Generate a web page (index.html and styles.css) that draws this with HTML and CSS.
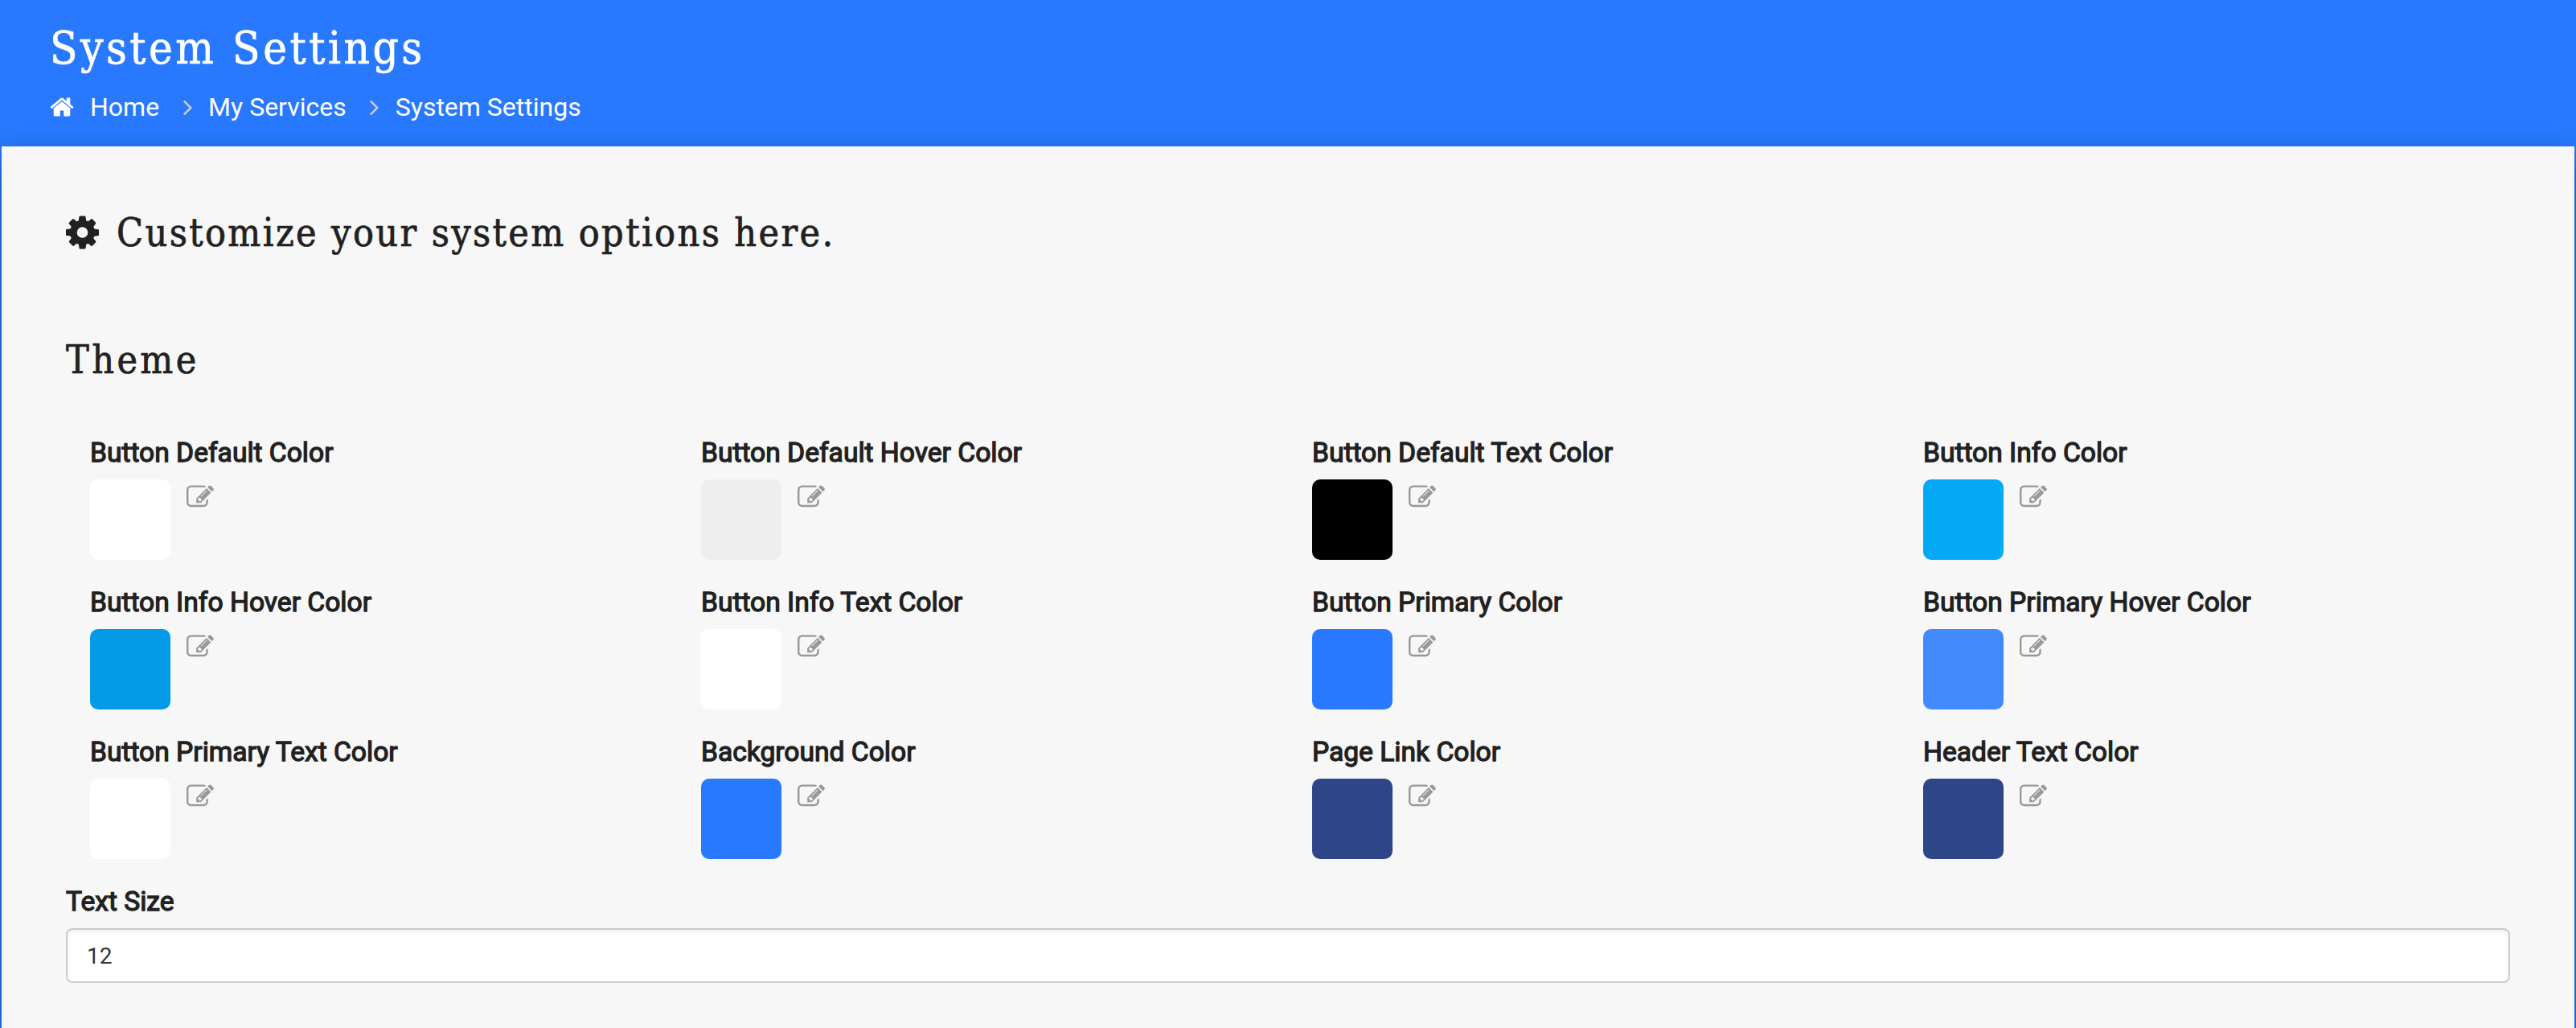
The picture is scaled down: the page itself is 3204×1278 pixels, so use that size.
FILE: index.html
```html
<!DOCTYPE html>
<html lang="en">
<head>
<meta charset="utf-8">
<title>System Settings</title>
<link rel="stylesheet" href="styles.css">
</head>
<body>
<svg class="defs" aria-hidden="true">
  <symbol id="home" viewBox="0 0 1792 1792"><path d="M1472 992v480q0 26-19 45t-45 19h-384v-384h-256v384h-384q-26 0-45-19t-19-45v-480q0-1 .5-3t.5-3l575-474 575 474q1 2 1 6zm223-69l-62 74q-8 9-21 11h-3q-13 0-21-7l-692-577-692 577q-12 8-24 7-13-2-21-11l-62-74q-8-10-7-23.500t11-21.500l719-599q32-26 76-26t76 26l244 204v-195q0-14 9-23t23-9h192q14 0 23 9t9 23v408l219 182q10 8 11 21.500t-7 23.500z"/></symbol>
  <symbol id="angle" viewBox="585 480 600 960"><path d="M1171 960q0 13-10 23l-466 466q-10 10-23 10t-23-10l-50-50q-10-10-10-23t10-23l393-393-393-393q-10-10-10-23t10-23l50-50q10-10 23-10t23 10l466 466q10 10 10 23z"/></symbol>
  <symbol id="cog" viewBox="128 128 1536 1536"><path d="M1152 896q0-106-75-181t-181-75-181 75-75 181 75 181 181 75 181-75 75-181zm512-109v222q0 12-8 23t-20 13l-185 28q-19 54-39 91 35 50 107 138 10 12 10 25t-9 23q-27 37-99 108t-94 71q-12 0-26-9l-138-108q-44 23-91 38-16 136-29 186-7 28-36 28h-222q-14 0-24.500-8.500t-11.500-21.500l-28-184q-49-16-90-37l-141 107q-10 9-25 9-14 0-25-11-126-114-165-168-7-10-7-23 0-12 8-23 15-21 51-66.500t54-70.500q-27-50-41-99l-183-27q-13-2-21-12.500t-8-23.500v-222q0-12 8-23t19-13l186-28q14-46 39-92-40-57-107-138-10-12-10-24 0-10 9-23 26-36 98.500-107.500t94.500-71.500q13 0 26 10l138 107q44-23 91-38 16-136 29-186 7-28 36-28h222q14 0 24.500 8.500t11.500 21.500l28 184q49 16 90 37l142-107q9-9 24-9 13 0 25 10 129 119 165 170 7 8 7 22 0 12-8 23-15 21-51 66.500t-54 70.500q26 50 41 98l183 28q13 2 21 12.500t8 23.500z"/></symbol>
  <symbol id="edit" viewBox="0 0 1792 1792"><path d="M888 1184l116-116-152-152-116 116v56h96v96h56zm440-720q-16-16-33 1l-350 350q-17 17-1 33t33-1l350-350q17-17 1-33zm80 594v190q0 119-84.500 203.500t-203.500 84.500h-832q-119 0-203.500-84.500t-84.500-203.500v-832q0-119 84.500-203.500t203.500-84.500h832q63 0 117 25 15 7 18 23 3 17-9 29l-49 49q-14 14-32 8-23-6-45-6h-832q-66 0-113 47t-47 113v832q0 66 47 113t113 47h832q66 0 113-47t47-113v-126q0-13 9-22l64-64q15-15 35-7t20 29zm-96-738l288 288-672 672h-288v-288zm444 132l-92 92-288-288 92-92q28-28 68-28t68 28l152 152q28 28 28 68t-28 68z"/></symbol>
</svg>
<header class="header">
  <h1 class="title">System Settings</h1>
  <nav class="crumbs">
    <svg class="home"><use href="#home"/></svg>
    <a>Home</a>
    <svg class="angle"><use href="#angle"/></svg>
    <a>My Services</a>
    <svg class="angle"><use href="#angle"/></svg>
    <a>System Settings</a>
  </nav>
</header>
<main class="panel">
  <h2 class="heading intro"><svg class="cog"><use href="#cog"/></svg><span>Customize your system options here.</span></h2>
  <h2 class="heading theme">Theme</h2>
  <section class="grid">
    <div class="option"><div class="label">Button Default Color</div><div class="pick"><i class="swatch white"></i><svg class="edit"><use href="#edit"/></svg></div></div>
    <div class="option"><div class="label">Button Default Hover Color</div><div class="pick"><i class="swatch gray"></i><svg class="edit"><use href="#edit"/></svg></div></div>
    <div class="option"><div class="label">Button Default Text Color</div><div class="pick"><i class="swatch black"></i><svg class="edit"><use href="#edit"/></svg></div></div>
    <div class="option"><div class="label">Button Info Color</div><div class="pick"><i class="swatch info"></i><svg class="edit"><use href="#edit"/></svg></div></div>
    <div class="option"><div class="label">Button Info Hover Color</div><div class="pick"><i class="swatch info-hover"></i><svg class="edit"><use href="#edit"/></svg></div></div>
    <div class="option"><div class="label">Button Info Text Color</div><div class="pick"><i class="swatch white"></i><svg class="edit"><use href="#edit"/></svg></div></div>
    <div class="option"><div class="label">Button Primary Color</div><div class="pick"><i class="swatch primary"></i><svg class="edit"><use href="#edit"/></svg></div></div>
    <div class="option"><div class="label">Button Primary Hover Color</div><div class="pick"><i class="swatch primary-hover"></i><svg class="edit"><use href="#edit"/></svg></div></div>
    <div class="option"><div class="label">Button Primary Text Color</div><div class="pick"><i class="swatch white"></i><svg class="edit"><use href="#edit"/></svg></div></div>
    <div class="option"><div class="label">Background Color</div><div class="pick"><i class="swatch primary"></i><svg class="edit"><use href="#edit"/></svg></div></div>
    <div class="option"><div class="label">Page Link Color</div><div class="pick"><i class="swatch navy"></i><svg class="edit"><use href="#edit"/></svg></div></div>
    <div class="option"><div class="label">Header Text Color</div><div class="pick"><i class="swatch navy"></i><svg class="edit"><use href="#edit"/></svg></div></div>
  </section>
  <label class="label" for="size">Text Size</label>
  <input class="input" id="size" type="text" value="12">
</main>
</body>
</html>
```
FILE: styles.css
```css
* { box-sizing: border-box; }
body {
  margin: 0;
  height: 1278px;
  overflow: hidden;
  display: flex;
  flex-direction: column;
  background: #2979ff;
  color: #212121;
  font-family: Roboto, sans-serif;
  font-size: 32px;
}
svg { fill: currentColor; flex: none; }
.defs { display: none; }
.header { flex: none; height: 182px; padding: 25px 61px 0; color: #fff; }
.title, .heading {
  margin: 0;
  font-family: "Roboto Slab", "DejaVu Serif Condensed", "DejaVu Serif", serif;
  font-stretch: condensed;
  font-weight: 400;
  white-space: nowrap;
  -webkit-text-stroke: .7px currentColor;
}
.title { padding-left: 1px; font-size: 56px; line-height: 70px; letter-spacing: 3.5px; }
.crumbs { display: flex; align-items: center; height: 40px; margin-top: 18px; }
.home { width: 32px; height: 32px; margin-right: 19px; }
.angle { width: 11px; height: 18px; margin: 2px 20.5px 0 29.5px; color: #ccc; }
.panel {
  flex: 1;
  margin: 0 2px;
  padding: 72px 80px 0;
  background: #f7f7f7;
  box-shadow: 0 16px 34px rgba(0, 0, 0, .2), 0 12px 40px rgba(0, 0, 0, .19);
}
.heading { font-size: 48px; line-height: 70px; letter-spacing: 2.4px; }
.intro { display: flex; align-items: center; gap: 22px; }
.cog { width: 41px; height: 42px; }
.theme { margin-top: 88px; letter-spacing: 3.4px; }
.grid {
  display: grid;
  grid-template-columns: repeat(4, 760px);
  grid-auto-rows: 186px;
  margin-top: 58px;
  padding-left: 30px;
}
.label { display: block; height: 56px; font-size: 33.6px; line-height: 46px; -webkit-text-stroke: 1.3px currentColor; }
.pick { display: flex; gap: 20px; }
.swatch { width: 100px; height: 100px; border-radius: 10px; }
.edit { width: 34px; height: 34px; margin-top: 5px; color: #999; }
.white { background: #fff; }
.gray { background: #eee; }
.black { background: #000; }
.info { background: #03a9f4; }
.info-hover { background: #039be5; }
.primary { background: #2979ff; }
.primary-hover { background: #448aff; }
.navy { background: #2e4688; }
.input {
  display: block;
  width: 3040px;
  height: 68px;
  padding: 0 24px;
  border: 2px solid #ccc;
  border-radius: 8px;
  background: #fff;
  box-shadow: inset 0 2px 4px rgba(0, 0, 0, .08);
  color: #333;
  font: 28px Roboto, sans-serif;
}
```
